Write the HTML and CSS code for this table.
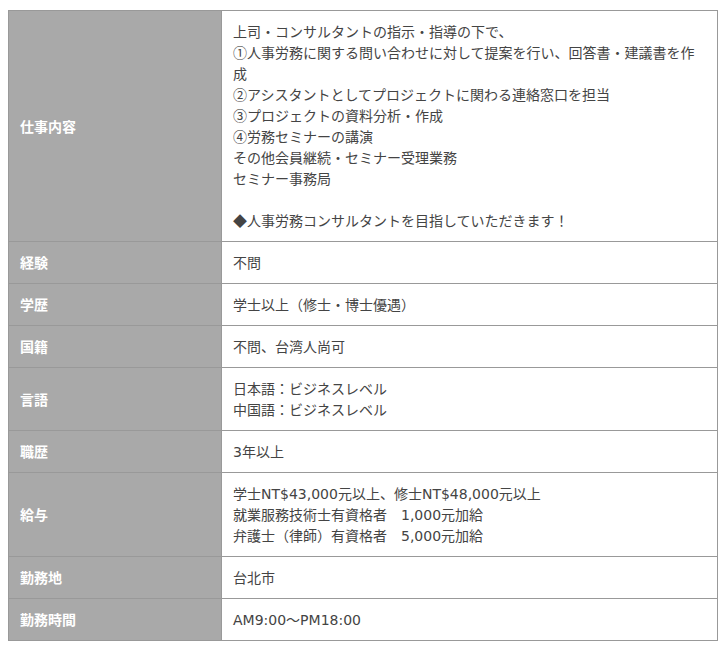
FILE: index.html
```html
<!DOCTYPE html>
<html lang="ja">
<head>
<meta charset="utf-8">
<title>募集要項</title>
<link rel="stylesheet" href="styles.css">
</head>
<body>
<table class="spec">
<colgroup><col class="c-head"><col class="c-body"></colgroup>
<tbody>
<tr><th>仕事内容</th><td>上司・コンサルタントの指示・指導の下で、<br>①人事労務に関する問い合わせに対して提案を行い、回答書・建議書を作成<br>②アシスタントとしてプロジェクトに関わる連絡窓口を担当<br>③プロジェクトの資料分析・作成<br>④労務セミナーの講演<br>その他会員継続・セミナー受理業務<br>セミナー事務局<br><br>◆人事労務コンサルタントを目指していただきます！</td></tr>
<tr><th>経験</th><td>不問</td></tr>
<tr><th>学歴</th><td>学士以上（修士・博士優遇）</td></tr>
<tr><th>国籍</th><td>不問、台湾人尚可</td></tr>
<tr><th>言語</th><td>日本語：ビジネスレベル<br>中国語：ビジネスレベル</td></tr>
<tr><th>職歴</th><td><span class="lat">3</span>年以上</td></tr>
<tr><th>給与</th><td>学士<span class="lat">NT$43,000</span>元以上、修士<span class="lat">NT$48,000</span>元以上<br>就業服務技術士有資格者　<span class="lat">1,000</span>元加給<br>弁護士（律師）有資格者　<span class="lat">5,000</span>元加給</td></tr>
<tr><th>勤務地</th><td>台北市</td></tr>
<tr><th>勤務時間</th><td><span class="lat">AM9:00</span>～<span class="lat">PM18:00</span></td></tr>
</tbody>
</table>
</body>
</html>
```
FILE: styles.css
```css
html, body {
  margin: 0;
  padding: 0;
  background: #fff;
}
body {
  padding: 10px 0 0 8px;
  font-family: "Noto Sans CJK JP", "Noto Sans", sans-serif;
  font-size: 14px;
  line-height: 21px;
  color: #444;
}
.lat {
  font-family: "DejaVu Sans", "Noto Sans CJK JP", sans-serif;
  line-height: 1;
}
.spec {
  width: 710px;
  border-collapse: collapse;
  table-layout: fixed;
}
.c-head { width: 213px; }
.spec th, .spec td {
  border: 1px solid #999;
  padding: 10px 10px 10px 11px;
  text-align: left;
}
.spec th {
  background: #a9a9a9;
  color: #fff;
  font-weight: bold;
  vertical-align: middle;
}
.spec td {
  background: #fff;
  vertical-align: top;
}
```
